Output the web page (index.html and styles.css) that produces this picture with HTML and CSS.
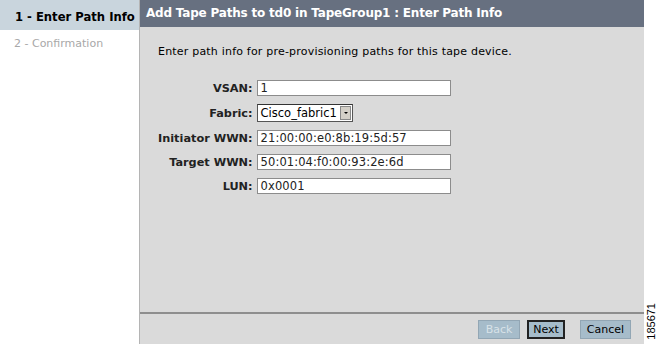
FILE: index.html
```html
<!DOCTYPE html>
<html lang="en">
<head>
  <meta charset="UTF-8" />
  <title>Add Tape Paths</title>
  <link rel="stylesheet" href="styles.css">
</head>
<body>

<div class="wizard">
  <!-- steps -->
  <div class="steps">
    <div class="step active">1 - Enter Path Info</div>
    <div class="step">2 - Confirmation</div>
  </div>

  <!-- main panel -->
  <div class="panel">
    <div class="title">Add Tape Paths to td0 in TapeGroup1 : Enter Path Info</div>
    <div class="body">
      <p class="intro">Enter path info for pre-provisioning paths for this tape device.</p>
      <div class="form">
        <label>VSAN:</label>
        <div class="field">1</div>
        <label>Fabric:</label>
        <div class="select"><span>Cisco_fabric1</span><span class="arrow"></span></div>
        <label>Initiator WWN:</label>
        <div class="field">21:00:00:e0:8b:19:5d:57</div>
        <label>Target WWN:</label>
        <div class="field">50:01:04:f0:00:93:2e:6d</div>
        <label>LUN:</label>
        <div class="field">0x0001</div>
      </div>
    </div>
    <div class="buttons">
      <button class="btn back" disabled>Back</button>
      <button class="btn next">Next</button>
      <button class="btn cancel">Cancel</button>
    </div>
  </div>

  <div class="edge"><span>185671</span></div>
</div>

</body>
</html>
```

FILE: styles.css
```css
body { margin: 0; background: #fff; font-family: "DejaVu Sans", Verdana, sans-serif; }
.wizard { display: flex; height: 344px; width: 657px; }

.steps { width: 139px; border-right: 1px solid #b4b4b4; background: #fff; }
.step { height: 28px; line-height: 28px; padding-left: 14px; font-size: 11px; color: #a8a8a8; }
.step.active { background: #c9d5dd; color: #000; font-weight: bold; font-size: 11.6px; padding-left: 15px; height: 30px; line-height: 34px; }

.panel { width: 504px; background: #dadada; display: flex; flex-direction: column; }
.title { height: 27px; line-height: 27px; background: #677080; color: #fff; font-weight: bold; font-size: 12px; letter-spacing: -0.2px; padding-left: 6px; }
.body { flex: 1; padding: 18px 0 0 18px; }
.intro { margin: 0 0 22px; font-size: 11px; letter-spacing: 0.2px; }

.form { display: grid; grid-template-columns: auto 194px; justify-content: start; column-gap: 4px; row-gap: 8px; align-items: center; font-size: 11px; }
.form label { text-align: right; font-weight: bold; font-size: 11.3px; white-space: nowrap; color: #222; }
.field { height: 14px; line-height: 14px; background: #fff; border: 1px solid #8c8c8c; padding-left: 3px; font-size: 11.5px; letter-spacing: 0.1px; color: #222; }
.select { box-sizing: border-box; width: 96px; height: 18px; background: #fff; border: 1px solid #555; border-top-color: #333; display: flex; align-items: center; padding-left: 3px; justify-content: space-between; font-size: 11.5px; }
.arrow { width: 9px; height: 12px; background: #d4d0c8; border: 1px solid #888; margin-right: 1px; position: relative; }
.arrow::after { content: ""; position: absolute; left: 3px; top: 5px; border: 2px solid transparent; border-top: 2px solid #000; border-bottom: 0; }

.buttons { height: 30px; border-top: 2px solid #8e8e8e; display: flex; justify-content: flex-end; align-items: center; padding-right: 13px; }
.btn { box-sizing: border-box; height: 19px; padding: 0; font-family: "DejaVu Sans", Verdana, sans-serif; font-size: 11px; background: #a6bcca; border: 1px solid #92a6b4; color: #000; }
.btn.back { width: 42px; color: #d8e2e8; }
.btn.next { width: 38px; margin-left: 7px; border: 2px solid #222; }
.btn.cancel { width: 51px; margin-left: 15px; }

.edge { flex: 1; display: flex; align-items: flex-end; justify-content: center; padding-bottom: 4px; }
.edge span { writing-mode: vertical-rl; transform: rotate(180deg); font-family: "Liberation Sans", Arial, sans-serif; font-size: 11px; color: #000; }
```
